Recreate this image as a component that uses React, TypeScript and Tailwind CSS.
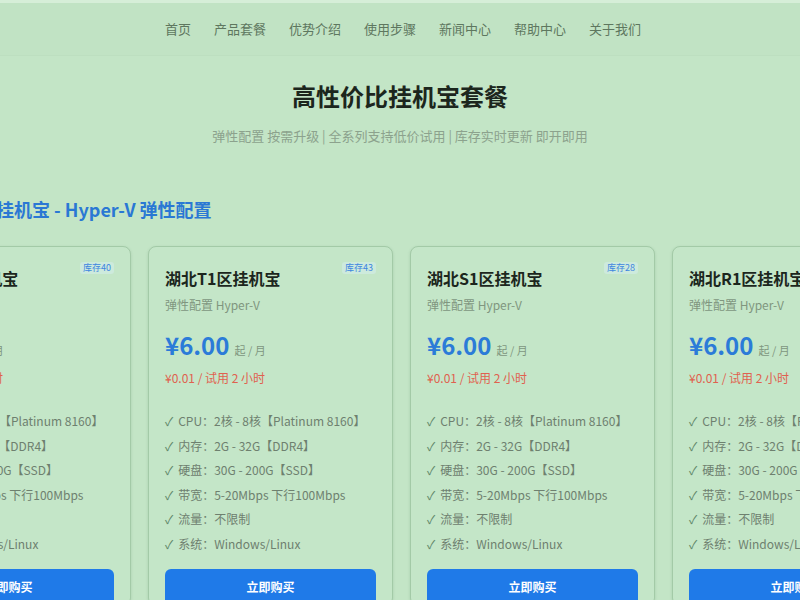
import React from 'react';

const navItems = ['首页', '产品套餐', '优势介绍', '使用步骤', '新闻中心', '帮助中心', '关于我们'];

const plans = [
  { name: '湖北E1区挂机宝', stock: 40 },
  { name: '湖北T1区挂机宝', stock: 43 },
  { name: '湖北S1区挂机宝', stock: 28 },
  { name: '湖北R1区挂机宝', stock: 35 },
];

const features = [
  'CPU：2核 - 8核【Platinum 8160】',
  '内存：2G - 32G【DDR4】',
  '硬盘：30G - 200G【SSD】',
  '带宽：5-20Mbps 下行100Mbps',
  '流量：不限制',
  '系统：Windows/Linux',
];

const font = { fontFamily: '"Noto Sans CJK SC", "Noto Sans", sans-serif' };

function PlanCard({ name, stock }: { name: string; stock: number }) {
  return (
    <div className="relative w-[245px] shrink-0 rounded-[8px] border border-[#a3caa7] bg-[#c4e6c8] px-[16px] pt-[19px] shadow-[0_1px_3px_rgba(60,110,70,0.18)]">
      <span className="absolute right-[16px] top-[15px] rounded-[3px] bg-[#cdeadc] px-[3px] text-[9px] leading-[12px] text-[#3d86e0]">
        库存{stock}
      </span>
      <div className="text-[16px] font-bold leading-[24px] text-[#1c261d]">{name}</div>
      <div className="mt-[6px] text-[12px] leading-[18px] text-[#80967f]">弹性配置 Hyper-V</div>
      <div className="mt-[15px] flex items-baseline gap-[5px]">
        <span className="text-[24px] font-bold leading-[32px] text-[#2b7bd8]">¥6.00</span>
        <span className="text-[11px] text-[#80967f]">起 / 月</span>
      </div>
      <div className="mt-[9px] text-[12px] leading-[16px] text-[#e0614f]">¥0.01 / 试用 2 小时</div>
      <ul className="mt-[23px]">
        {features.map((f) => (
          <li key={f} className="flex h-[24.5px] items-center gap-[5px] text-[12px] text-[#6e806f]">
            <span className="text-[#62876a]">✓</span>
            <span>{f}</span>
          </li>
        ))}
      </ul>
      <button className="mt-[13px] h-[36px] w-full rounded-[6px] bg-[#1f7ae8] text-[12px] font-bold text-white">
        立即购买
      </button>
    </div>
  );
}

export default function App() {
  return (
    <div className="h-[600px] w-[800px] overflow-hidden bg-[#c3e5c6]" style={font}>
      <header className="flex h-[56px] items-center justify-center gap-[23px] border-t-[3px] border-[#d6eed8] border-b border-b-[#bddfc0] bg-[#c1e3c4] pl-[6px]">
        {navItems.map((item) => (
          <a key={item} className="text-[13px] text-[#5e775f]">
            {item}
          </a>
        ))}
      </header>

      <div className="mt-[24px] text-center">
        <h1 className="text-[24px] font-bold leading-[32px] text-[#1c261d]">高性价比挂机宝套餐</h1>
        <p className="mt-[14px] text-[13px] leading-[20px] text-[#8ca28d]">
          弹性配置 按需升级 | 全系列支持低价试用 | 库存实时更新 即开即用
        </p>
      </div>

      <section className="ml-[-114px] mt-[49px]">
        <h2 className="pl-[74px] text-[18px] font-bold leading-[28px] text-[#2a78d4]">
          湖北挂机宝 - Hyper-V 弹性配置
        </h2>
        <div className="mt-[23px] flex gap-[17px]">
          {plans.map((p) => (
            <PlanCard key={p.name} name={p.name} stock={p.stock} />
          ))}
        </div>
      </section>
    </div>
  );
}
